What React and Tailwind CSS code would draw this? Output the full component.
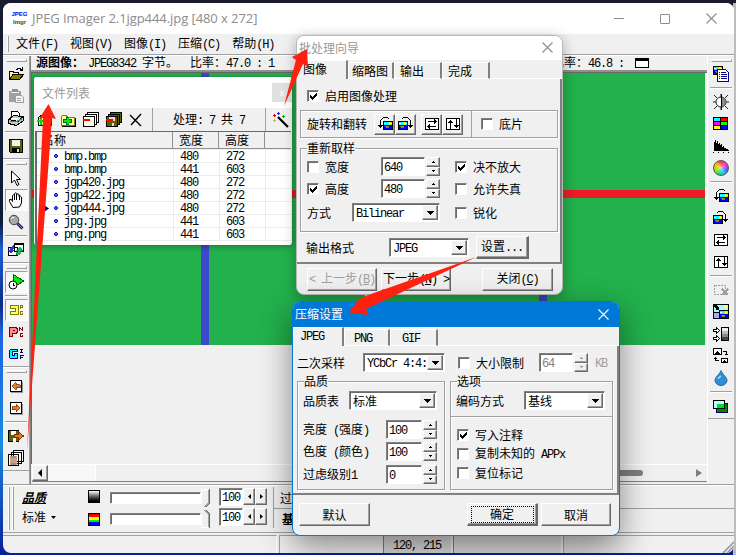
import React from "react";

const RAISED =
  "border border-t-white border-l-white border-r-[#696969] border-b-[#696969] shadow-[inset_-1px_-1px_0_#a0a0a0] bg-[#f0f0f0]";
const SUNKEN =
  "border border-t-[#808080] border-l-[#808080] border-r-white border-b-white shadow-[inset_1px_1px_0_#696969] bg-white";

// Han text stays full width, Latin runs are set at half of that width.
function T({ children, className = "" }) {
  const parts = String(children).split(/([\x20-\x7e]+)/);
  return (
    <span className={"whitespace-pre leading-none " + className}>
      {parts.map((p, i) =>
        i % 2 ? (
          <span key={i} className="font-['Liberation_Mono',monospace] tracking-[-1.2px]">
            {p}
          </span>
        ) : (
          p
        )
      )}
    </span>
  );
}

function Check({ on, children, className = "" }) {
  return (
    <div className={"flex items-center gap-[6px] " + className}>
      <div className={"size-[12px] shrink-0 " + SUNKEN}>
        {on && (
          <svg width="10" height="10" viewBox="0 0 10 10" shapeRendering="crispEdges">
            <path d="M2 4v3h1v1h1v1h1v-1h1v-1h1v-1h1v-1h1v-3h-1v1h-1v1h-1v1h-1v1h-1v-1h-1v-1z" fill="#000" />
          </svg>
        )}
      </div>
      <T>{children}</T>
    </div>
  );
}

function Spin({ value, w, off }) {
  return (
    <div className="flex gap-px">
      <div className={"flex h-[19px] items-center pl-[2px] " + SUNKEN + " " + w}>
        <T className={off ? "text-[#808080]" : ""}>{value}</T>
      </div>
      <div className="flex w-[14px] flex-col">
        {["M2 0h1v1h1v1H1V1h1z", "M1 0h3v1H3v1H2V1H1z"].map((d) => (
          <div key={d} className={"flex h-[9.5px] items-center justify-center " + RAISED}>
            <svg width="5" height="2" shapeRendering="crispEdges">
              <path d={d} fill={off ? "#999" : "#000"} />
            </svg>
          </div>
        ))}
      </div>
    </div>
  );
}

function Select({ children, className = "" }) {
  return (
    <div className={"flex h-[19px] items-center p-px " + SUNKEN + " " + className}>
      <div className="flex min-w-0 flex-1 items-center pl-[2px]">
        <T>{children}</T>
      </div>
      <div className={"flex h-[15px] w-[16px] shrink-0 items-center justify-center " + RAISED}>
        <svg width="7" height="4" shapeRendering="crispEdges">
          <path d="M0 0h7v1H6v1H5v1H4v1H3V3H2V2H1V1H0z" />
        </svg>
      </div>
    </div>
  );
}

function Button({ children, className = "" }) {
  return (
    <div className={"flex h-[23px] shrink-0 items-center justify-center " + RAISED + " " + className}>
      {children}
    </div>
  );
}

function Group({ title, className = "", children }) {
  return (
    <div className={"flex flex-col border border-[#a0a0a0] shadow-[1px_1px_0_#fff,inset_1px_1px_0_#fff] " + className}>
      {title && (
        <div className="-mt-[7px] ml-[6px] h-[13px] self-start bg-[#f0f0f0]">
          <T>{title}</T>
        </div>
      )}
      {children}
    </div>
  );
}

function Tabs({ items }) {
  return (
    <div className="flex h-[19px] shrink-0 items-end">
      {items.map(([t, w, pad], i) => (
        <div
          key={t}
          className={
            "flex items-center border-t border-r-2 border-l border-t-white border-l-white border-r-[#808080] " +
            (i ? "h-[17px] border-b border-b-white " : "h-[19px] pb-[2px] ") +
            w +
            " " +
            pad
          }
        >
          <T>{t}</T>
        </div>
      ))}
      <div className="h-px flex-1 bg-white" />
    </div>
  );
}

const CloseX = ({ c }) => (
  <svg width="11" height="11" viewBox="0 0 11 11" fill="none" stroke={c} strokeWidth="1.1">
    <path d="M.5.5l10 10M10.5.5l-10 10" />
  </svg>
);

function Ic({ children, w = 16, h = 16, className = "" }) {
  return (
    <svg width={w} height={h} viewBox={`0 0 ${w} ${h}`} fill="none" shapeRendering="crispEdges" className={className}>
      {children}
    </svg>
  );
}

const Photo = ({ x, y }) => (
  <g transform={`translate(${x} ${y})`}>
    <path d="M0 0h10v9H0z" fill="#000" />
    <path d="M1 1h8v3H1z" fill="#0ff" />
    <path d="M1 4h8v4H1z" fill="#00f" />
    <path d="M1 2h2v1H1z" fill="#fff" />
    <path d="M6 1h2v3H6zM5 2h4v1H5z" fill="#ff0" />
    <path d="M2 5h4v2H3v-1H2z" fill="#998019" />
  </g>
);
const RotL = () => (
  <Ic>
    <Photo x={6} y={5} />
    <path d="M5 2h1V1h5v1h1v1h-1V2H6v1H5v1H4v5h2v1H5v1H4v1H3v-1H2v-1H1V9h2V4h1V3h1z" fill="#000" />
  </Ic>
);
const RotR = () => (
  <Ic>
    <Photo x={0} y={5} />
    <path d="M11 2h-1V1H5v1H4v1h1V2h5v1h1v1h1v5h-2v1h1v1h1v1h1v-1h1v-1h1V9h-2V4h-1V3h-1z" fill="#000" />
  </Ic>
);
const FlipH = () => (
  <Ic>
    <path d="M1.500 2.500h13v11h-13z" fill="#fff" stroke="#000" />
    <path d="M4 5.500h9M10.500 3v5M11.500 4v3M3 10.500h9M5.500 8v5M4.500 9v3" stroke="#000" />
  </Ic>
);
const FlipV = () => (
  <Ic>
    <path d="M1.500 2.500h13v11h-13z" fill="#fff" stroke="#000" />
    <path d="M5.500 4v9M3 6.500h5M4 5.500h3M11.500 3v9M9 9.500h5M10 10.500h3" stroke="#000" />
  </Ic>
);
const Open = () => (
  <Ic>
    <path d="M1.500 13V5.500h4v1h5V8" fill="#ff9" stroke="#000" />
    <path d="M1.500 13.500L5 8.500h10.500l-4 5z" fill="#808000" stroke="#000" />
    <path d="M8 3.500h1V2.500h3v1h1v1h1M14.500 1v4M12 4.500h3" stroke="#000" />
  </Ic>
);
const Paste = () => (
  <Ic>
    <path d="M1 3h12v11H1z" fill="#a0a0a0" />
    <path d="M4 1h6v4H4z" fill="#909090" />
    <path d="M3 4h8v1H3z" fill="#f0f0f0" />
    <path d="M7.500 7.500h6l2 2v5h-8z" fill="#f4f4f4" stroke="#a0a0a0" />
    <path d="M9 10.500h4M9 12.500h4" stroke="#a0a0a0" />
  </Ic>
);
const Print = () => (
  <Ic>
    <path d="M3.500 6.500v-5h6l2 2v4" fill="#fff" stroke="#000" />
    <path d="M.5 9.500l5-4 9.500 1-5 5zM.5 9.500v4l8 2 7-5V7" fill="#c4c4c4" stroke="#000" />
    <path d="M2 11.500h7l5-3" stroke="#0aa" strokeWidth="1.500" />
    <path d="M3 8.500h7" stroke="#fff" />
  </Ic>
);
const Save = () => (
  <Ic>
    <path d="M1.500 1.500h13v13h-12l-1-1z" fill="#606000" stroke="#000" />
    <path d="M4 2h8v6H4z" fill="#f0f0f0" />
    <path d="M4 10h8v5H4z" fill="#000" />
    <path d="M9 11h2v3H9z" fill="#ddd" />
  </Ic>
);
const Cursor = () => (
  <Ic>
    <path d="M3.500 1v12l3-3 2.500 5.500 2-1-2.500-5h4z" fill="#fff" stroke="#000" shapeRendering="auto" />
  </Ic>
);
const Hand = () => (
  <Ic>
    <path
      d="M5 15.500L1.500 9.500V7.500h2l1 2V3.500q1-1.500 2 0V1.500q1.200-1.500 2.200 0V2.500q1.200-1.500 2.300 0v2q1.500-1 2.500.5v6l-2 4z"
      fill="#fff"
      stroke="#000"
      shapeRendering="auto"
    />
    <path d="M6.500 3v5M8.700 2v6M11 3v5" stroke="#000" />
  </Ic>
);
const Mag = () => (
  <Ic>
    <circle cx="6" cy="6" r="4.700" fill="#a8a8a8" stroke="#444" shapeRendering="auto" />
    <path d="M3 5q1-2 3-2" stroke="#fff" />
    <path d="M9.500 9.500l5 5" stroke="#223" strokeWidth="3" shapeRendering="auto" />
    <path d="M10 10l4 4" stroke="#77f" />
  </Ic>
);
const Swap = () => (
  <Ic>
    <path d="M6.500 1.500h9v8h-9zM.5 5.500h9v8h-9z" fill="#fff" stroke="#000" />
    <path d="M6 2.500h9" stroke="#000" />
    <path d="M6 3L3 5l-1 3H0l3 4 3-4H4l2-2z" fill="#33c" />
    <path d="M12 5l3 4h-2l-1 3-4 1v-2l2-1V9H8z" fill="#0c4" stroke="#063" strokeWidth=".6" />
  </Ic>
);
const Play = () => (
  <Ic>
    <path d="M5.500.5v13l10-6.500z" fill="#0e0" stroke="#060" />
    <circle cx="5" cy="11" r="4" fill="#fff" stroke="#000" shapeRendering="auto" />
    <path d="M5 8.500v3h2" stroke="#000" />
  </Ic>
);
const JpegI = () => (
  <Ic>
    <path d="M2 3.500h8v9H2v-3h5v-3H2z" fill="#ff6" stroke="#808000" />
    <path d="M12.500 7V3.500h2v2h-2M15 9.500h-2.500v3h2v-1.500" stroke="#808000" />
  </Ic>
);
const PngI = () => (
  <Ic>
    <path d="M1.500 3.500h6l2 1v4l-2 1h-3v3h-3z" fill="#f88" stroke="#800000" />
    <path d="M5 6h2v1H5z" fill="#800000" />
    <path d="M11.500 7V3M12.500 4v1M13.500 5v1M14.500 3v4M15 9.500h-2.500v3h2v-1.500" stroke="#800000" />
  </Ic>
);
const GifI = () => (
  <Ic>
    <path d="M9.500 3.500h-7l-1 1v7l1 1h7v-5h-3v2h-2v-4h5z" fill="#0ff" stroke="#000080" />
    <path d="M12 3.500h3M13.500 3v4M12 6.500h3M12.500 13V9.500h3M12.500 11.500h2" stroke="#000080" />
  </Ic>
);
const ArrowBox = ({ flip }) => (
  <Ic>
    <path d="M3 4h12v11H3z" fill="#999" />
    <path d="M2.500 2.500h11v11h-11z" fill="#fff" stroke="#000" />
    <path
      d={flip ? "M4 6.500h4v-2l4 3.500-4 3.500v-2H4z" : "M12 6.500H8v-2L4 8l4 3.500v-2h4z"}
      fill="#e87a20"
      stroke="#7a3500"
      strokeWidth=".8"
    />
  </Ic>
);
const SaveArrow = () => (
  <Ic>
    <path d="M.5 2.500h10v11H.5z" fill="#606000" stroke="#000" />
    <path d="M3 3h5v4H3zM5 10h3v4H5z" fill="#fff" />
    <path d="M6 6.500h4v-3l5.500 4.500-5.500 4.500v-3H6z" fill="#e87a20" stroke="#7a3500" />
  </Ic>
);
const Faces = () => (
  <Ic>
    <path d="M5.500.5h10v11h-10zM3.500 2.500h10v11h-10zM.5 4.500h10v11H.5z" fill="#fff" stroke="#000" />
    <path d="M2 6h7v9H2z" fill="#c9a08c" />
    <path d="M3 6h5v2H3zM3 13h5v2H3z" fill="#a87" />
  </Ic>
);

const Doc = () => (
  <Ic>
    <Photo x={0} y={0} />
    <path d="M4.500 3.500h8l3 3v9h-11z" fill="#fff" stroke="#000080" />
    <path d="M6 6.500h1M8 6.500h5M6 8.500h1M8 8.500h6M6 10.500h1M8 10.500h6M6 12.500h1M8 12.500h6" stroke="#000080" />
  </Ic>
);
const Bright = () => (
  <Ic>
    <path d="M1 1l3 3M15 1l-3 3M1 15l3-3M15 15l-3-3M0 8h3M13 8h3M8 0v16" stroke="#222" shapeRendering="auto" />
    <circle cx="8" cy="8" r="5" fill="#fff" stroke="#222" shapeRendering="auto" />
    <path d="M8 3.500a4.500 4.500 0 010 9z" fill="#888" />
    <path d="M8.500 0v16" stroke="#000" />
  </Ic>
);
const Grid6 = () => (
  <Ic>
    <path d="M0 1h15v13H0z" fill="#000" />
    <path d="M1 2h6v3H1z" fill="#0ff" />
    <path d="M8 2h6v3H8z" fill="red" />
    <path d="M1 6h6v3H1z" fill="#f0f" />
    <path d="M8 6h6v3H8z" fill="#0f0" />
    <path d="M1 10h6v3H1z" fill="#ff0" />
    <path d="M8 10h6v3H8z" fill="#00f" />
  </Ic>
);
const Hist = () => (
  <Ic>
    <path d="M1 12V4h1V2h1v3h1V3h1v3h1V5h1v2h1V6h1v3h1V8h1v2h2v1h2v1h1v1H1z" fill="#000" />
    <path d="M0 14h1v1H0zM5 14h1v1H5zM10 14h1v1h-1zM15 14h1v1h-1z" fill="#000" />
  </Ic>
);
const Wheel = () => (
  <div className="size-[16px] rounded-full border border-[#555] bg-[radial-gradient(circle,#fff9,transparent_60%),conic-gradient(#f33,#e3c,#55f,#0cf,#2d5,#ad0,#fb0,#f33)]" />
);
const Crop = () => (
  <Ic>
    <path d="M1.500 3.500h11v9h-11z" stroke="#a0a0a0" strokeDasharray="2 1" />
    <path d="M9 7l6 6M15 7l-6 6" stroke="#a0a0a0" strokeWidth="1.500" />
  </Ic>
);
const Resize = () => (
  <Ic>
    <path d="M0 0h16v15H0z" fill="#000" />
    <path d="M1 1h14v7H1z" fill="#9ff" />
    <path d="M1 1h3v1h1v1h1v3H3V4H2V3H1z" fill="#000" />
    <path d="M1 9h5v5H1z" fill="#aaf" />
    <path d="M11 1h3v3h-3z" fill="#ff8" />
    <Photo x={6} y={6} />
  </Ic>
);
const Gray = () => (
  <Ic>
    <path d="M.5 3.500h3v-2l3 3-3 3v-2h-3zM.5 11.500h3v-2l3 3-3 3v-2h-3z" fill="#fff" stroke="#000" />
    <path d="M8 1h8v14H8z" fill="#000" />
    <path d="M9 2h6v3H9z" fill="#eee" />
    <path d="M9 5h6v3H9z" fill="#bbb" />
    <path d="M9 8h6v3H9z" fill="#888" />
    <path d="M9 11h6v3H9z" fill="#444" />
  </Ic>
);
const Thumbs = () => (
  <Ic>
    <path d="M.5.5h8v6h-8zM8.500 10.500h6v4h-6z" fill="#fff" stroke="#000" />
    <path d="M2 5h1V4h1V3h1v1h1v1h1v1H2zM10 13h1v-1h1v1h1v1h-3z" fill="#000" />
    <path d="M10 3.500h3.500V7M12 6.500h3M6 12.500H2.500V9M1 10.500h3" stroke="#000" />
  </Ic>
);
const Drop = () => (
  <svg width="14" height="16" viewBox="0 0 14 16">
    <path d="M7 .5C6 4 1 7 1 10.500a6 5 0 0012 0C13 7 8 4 7 .5z" fill="#2e8fd6" stroke="#2b6ca3" />
    <path d="M4 9q1-2 3-3" stroke="#a9dcff" strokeWidth="1.500" fill="none" />
  </svg>
);
const Layers = () => (
  <Ic>
    <path d="M3.500 5.500h11v9h-11z" fill="#080" stroke="#000080" />
    <path d="M.5 2.500h11v8H.5z" fill="#bff" stroke="#000" />
    <path d="M4 6h7v4H4z" fill="#0d3" />
  </Ic>
);

const AddFile = () => (
  <Ic>
    <path d="M1.500 5.500l4-3h6l3 3v8h-13z" fill="#ff9" stroke="#000" />
    <path d="M0 9h8M4 5v8" stroke="#0d0" strokeWidth="2" />
  </Ic>
);
const AddFolder = () => (
  <Ic>
    <path d="M1.500 13.500v-9l1-1h4l1 2h7v8z" fill="#ff9" stroke="#808000" />
    <path d="M15.500 6v8.500H2" stroke="#000" />
    <path d="M3 9h9M7.500 5v8" stroke="#063" strokeWidth="3.500" />
    <path d="M4 9h7M7.500 6v6" stroke="#0e0" strokeWidth="2" />
  </Ic>
);
const DelFile = ({ dark }) => (
  <Ic>
    {[[4.5, 0.5], [2.5, 2.5], [0.5, 4.500]].map(([x, y]) => (
      <path
        key={x}
        d={`M${x} ${y}h11v10h-11z`}
        fill={dark ? "#606000" : "#ffe"}
        stroke="#000"
      />
    ))}
    {dark && <path d="M3 5h6v4H3zM6 11h2v3H6z" fill="#ddd" />}
    <path d="M0 8h7" stroke="red" strokeWidth="2" />
  </Ic>
);
const Wand = () => (
  <Ic>
    <path d="M5 5l10 10" stroke="#000" strokeWidth="2.200" shapeRendering="auto" />
    <path d="M5 0h1v1h1v1H6v1H5V2H4V1h1z" fill="#22c" />
    <path d="M1 2h1v1h1v1H2v1H1V4H0V3h1z" fill="#d00" />
    <path d="M10 3h1v1h1v1h-1v1h-1V5H9V4h1z" fill="#0a0" />
    <path d="M1 7h1v1h1v1H2v1H1V9H0V8h1z" fill="#cc0" />
  </Ic>
);

const Tool = ({ children, on }) => (
  <div
    className={
      "flex h-[22px] w-[23px] shrink-0 items-center justify-center " +
      (on
        ? "border border-t-[#a0a0a0] border-r-white border-b-white border-l-[#a0a0a0] bg-[#f8f8f8]"
        : "")
    }
  >
    {children}
  </div>
);
const Sep = () => (
  <div className="flex h-[6px] w-full shrink-0 items-center px-[2px]">
    <div className="h-[2px] w-full border-t border-[#a0a0a0] bg-white" />
  </div>
);
const Grip = ({ line }) => (
  <div className={"flex w-full shrink-0 flex-col items-center " + (line ? "h-[10px]" : "h-[7px]")}>
    {line && <div className="mt-px mb-[2px] h-[2px] w-full border-t border-[#a0a0a0] bg-white" />}
    <div className={"h-[3px] w-[21px] border border-t-white border-r-[#a0a0a0] border-b-[#a0a0a0] border-l-white " + (line ? "" : "mt-[3px]")} />
  </div>
);

function LeftBar() {
  return (
    <div className="flex w-[27px] shrink-0 flex-col items-center border-r border-[#a0a0a0]">
      <Grip />
      <Tool><Open /></Tool>
      <Tool><Paste /></Tool>
      <Tool><Print /></Tool>
      <Sep />
      <Tool><Save /></Tool>
      <Grip line />
      <Tool><Cursor /></Tool>
      <Tool on><Hand /></Tool>
      <Tool><Mag /></Tool>
      <Sep />
      <Tool><Swap /></Tool>
      <Grip line />
      <Tool on><Play /></Tool>
      <Sep />
      <Tool on><JpegI /></Tool>
      <Tool><PngI /></Tool>
      <Tool><GifI /></Tool>
      <Grip line />
      <Tool><ArrowBox /></Tool>
      <Tool><ArrowBox flip /></Tool>
      <Sep />
      <Tool><SaveArrow /></Tool>
      <Tool><Faces /></Tool>
      <div className="mt-px h-px w-full bg-[#a0a0a0]" />
    </div>
  );
}

function RightBar() {
  return (
    <div className="flex w-[27px] shrink-0 flex-col items-center border-l border-white">
      <Grip />
      <Tool><Doc /></Tool>
      <Sep />
      <Tool><Bright /></Tool>
      <Tool><Grid6 /></Tool>
      <Tool><Hist /></Tool>
      <Tool><Wheel /></Tool>
      <Sep />
      <Tool><RotL /></Tool>
      <Tool><RotR /></Tool>
      <Tool><FlipH /></Tool>
      <Tool><FlipV /></Tool>
      <Sep />
      <Tool><Crop /></Tool>
      <Tool><Resize /></Tool>
      <Tool><Gray /></Tool>
      <Tool><Thumbs /></Tool>
      <Tool><Drop /></Tool>
      <Sep />
      <Tool><Layers /></Tool>
      <div className="mt-px h-px w-full bg-[#a0a0a0]" />
    </div>
  );
}

function Slider({ down }) {
  return (
    <div className="flex w-[100px] items-center">
      <div className={"h-[12px] w-[91px] shrink-0 " + SUNKEN} />
      <Ic w={9} h={18}>
        <g transform={down ? "" : "translate(0 18) scale(1 -1)"}>
          <path d="M0 0h8v14l-4 4-4-4z" fill="#f0f0f0" />
          <path d="M.5 0v14M0 .5h8" stroke="#fff" />
          <path d="M8.500 0v14l-4 4" stroke="#696969" />
          <path d="M7.500 1v13l-4 4" stroke="#a0a0a0" />
        </g>
      </Ic>
    </div>
  );
}

function NumBox() {
  return (
    <div className="flex h-[18px]">
      <div className={"flex w-[24px] items-center pl-[2px] " + SUNKEN}>
        <T>100</T>
      </div>
      {["M3 0v5L0 2.500z", "M0 0v5l3-2.500z"].map((d) => (
        <div key={d} className={"flex h-[17px] w-[12px] items-center justify-center " + RAISED}>
          <svg width="3" height="5"><path d={d} /></svg>
        </div>
      ))}
    </div>
  );
}

function Picture({ className, bar }) {
  return (
    <div className={"relative h-[272px] overflow-hidden bg-[#22b14c] " + className}>
      <div className="mt-[117px] h-[8px] bg-[#ed1c24]" />
      <div className={"absolute top-0 h-full w-[8px] bg-[#3f48cc] " + bar} />
    </div>
  );
}

function MainWindow() {
  return (
    <div className="absolute top-[3px] left-[3px] flex h-[550px] w-[731px] flex-col overflow-hidden rounded-lg bg-[#f0f0f0]">
      <div className="flex h-[31px] shrink-0 items-center bg-white pl-[8px]">
        <div className="flex w-[17px] flex-col items-center gap-px font-['Liberation_Sans',sans-serif] text-[6px] leading-[7px] font-bold">
          <span className="text-[#0000ff]">JPEG</span>
          <span className="text-[#006020]">Imgr</span>
        </div>
        <span className="ml-[4px] flex-1 font-['Open_Sans',sans-serif] text-[13px] tracking-[-0.07px] whitespace-pre text-[#8c8c8c]">
          JPEG Imager 2.1jgp444.jpg [480 x 272]
        </span>
        <div className="flex items-center gap-[36px] pr-[17px]">
          <div className="h-px w-[10px] bg-[#8c8c8c]" />
          <div className="size-[10px] rounded-[1px] border border-[#8c8c8c]" />
          <CloseX c="#8c8c8c" />
        </div>
      </div>
      <div className="flex h-[21px] shrink-0 items-center gap-[12px] border-b border-[#a0a0a0] pl-[4px]">
        <div className="-mr-[5px] h-[16px] w-[2px] border-r border-[#a0a0a0] bg-white" />
        {["文件(F)", "视图(V)", "图像(I)", "压缩(C)", "帮助(H)"].map((m) => (
          <T key={m}>{m}</T>
        ))}
      </div>

      <div className="flex h-[429px] shrink-0 border-t border-white">
        <LeftBar />
        <div className="flex flex-1 flex-col border-l border-[#808080]">
          <div className="flex h-[16px] shrink-0 items-center justify-between border-b-2 border-[#909090] pr-[58px] pl-[5px]">
            <div className="flex">
              <T className="font-bold">源图像：</T>
              <T className="ml-[4px]">JPEG8342 字节。</T>
              <T className="ml-[12px]">比率：47.0 : 1</T>
            </div>
            <div className="flex items-center">
              <T className="mr-[11px]">比率：46.8 :</T>
              <div className="h-[10px] w-[14px] border border-t-[3px] border-black bg-white" />
            </div>
          </div>
          <div className="flex flex-1 border-t border-l border-[#696969]">
            <Picture className="w-[333px]" bar="left-[169px]" />
            <div className="h-[272px] w-[4px] border-r border-l border-r-[#696969] border-l-white bg-[#c8c8c8]" />
            <Picture className="mr-[2px] flex-1" bar="left-[170px]" />
          </div>
          <div className="mb-[2px] ml-[1px] flex h-[18px] shrink-0 items-center border-t border-b border-t-white border-b-[#808080]">
            <div className={"flex h-[16px] w-[16px] items-center justify-center " + RAISED}>
              <svg width="4" height="8"><path d="M4 0v8L0 4z" /></svg>
            </div>
            <div className="h-full w-[47px] bg-[#f8f8f8]" />
            <div className="h-full w-[275px] border-l border-white" />
            <div className="flex flex-1 items-center justify-between pr-[5px] pl-[60px]">
              <div className="h-[6px] w-[213px] rounded-full bg-[#808080]" />
              <svg width="6" height="8"><path d="M0 0v8l6-4z" fill="#808080" /></svg>
            </div>
          </div>
        </div>
        <RightBar />
      </div>

      <div className="flex h-[49px] shrink-0 border-t border-b border-[#a0a0a0] pt-[2px] shadow-[inset_0_1px_0_#fff]">
        <div className="ml-[5px] h-[43px] w-[2px] border-r border-[#a0a0a0] bg-white" />
        <div className="ml-[2px] h-[43px] w-[2px] border-r border-[#a0a0a0] bg-white" />
        <div className="ml-[8px] flex w-[66px] flex-col gap-[8px] pt-[4px]">
          <T className="self-start font-bold italic underline">品质</T>
          <div className="flex items-center gap-[5px]">
            <T>标准</T>
            <svg width="5" height="3"><path d="M0 0h5L2.500 3z" /></svg>
          </div>
        </div>
        <div className="flex w-[22px] flex-col gap-[10px] pt-[3px]">
          <div className="h-[13px] w-[12px] border border-black bg-linear-to-b from-white to-black" />
          <div className="flex h-[13px] w-[12px] flex-col border border-black">
            <div className="flex-1 bg-[#ff0000]" />
            <div className="flex-1 bg-[#ffff00]" />
            <div className="flex-1 bg-[#00ee00]" />
            <div className="flex-1 bg-[#0000ff]" />
          </div>
        </div>
        <div className="flex w-[109px] flex-col gap-[3px] pt-[2px]">
          <Slider down />
          <Slider />
        </div>
        <div className="flex w-[54px] flex-col gap-[2px] pt-px">
          <NumBox />
          <NumBox />
        </div>
        <div className="h-[41px] flex-1 border-l border-[#a0a0a0]">
          <div className="flex h-[22px] items-center border-b border-[#a0a0a0] pl-[6px]"><T>过滤</T></div>
          <div className="flex h-[20px] items-center pl-[8px]"><T className="font-bold">基线</T></div>
        </div>
      </div>
      <div className="flex flex-1 items-stretch gap-[2px] pt-[2px]">
        <div className="w-[274px] border-t border-r border-t-[#a0a0a0] border-r-white" />
        <div className="flex w-[102px] items-center border-t border-l border-[#a0a0a0] pl-[35px] text-[#f4f4f4]"><T>0 0秒</T></div>
        <div className="flex w-[68px] items-center border-t border-l border-[#808080] bg-[#dcdcdc] pl-[9px]"><T>120, 215</T></div>
        <div className="w-[108px] border-t border-l border-[#808080] bg-[#dcdcdc]" />
        <div className="flex flex-1 items-end justify-end border-t border-l border-[#a0a0a0] bg-linear-to-r from-[#dcdcdc] to-[#f0f0f0] to-50%">
          <svg width="12" height="12"><path d="M1 12L12 1M5 12l7-7M9 12l3-3" stroke="#909090" strokeWidth="1.500" /></svg>
        </div>
      </div>
    </div>
  );
}

const FILES = [
  ["bmp.bmp", 480, 272],
  ["bmp.bmp", 441, 603],
  ["jgp420.jpg", 480, 272],
  ["jgp422.jpg", 480, 272],
  ["jgp444.jpg", 480, 272],
  ["jpg.jpg", 441, 603],
  ["png.png", 441, 603],
];

function FileList() {
  return (
    <div className="absolute top-[77px] left-[34px] flex h-[168px] w-[258px] flex-col overflow-hidden rounded-[3px] bg-[#f0f0f0] shadow-[0_1px_6px_rgba(0,0,0,.35)]">
      <div className="flex h-[31px] shrink-0 items-center justify-between bg-white pl-[8px] text-[#999]">
        <T>文件列表</T>
        <div className="flex h-[19px] w-[20px] items-center justify-center bg-[#e0e0e0] text-[9px] text-white">x</div>
      </div>
      <div className="flex h-[23px] shrink-0 items-center">
        <div className="flex w-[118px] gap-[7px] pl-[3px]">
          <AddFile />
          <AddFolder />
          <DelFile />
          <DelFile dark />
          <Ic w={14} h={16}>
            <path d="M1 3l11 11M12 2L2 13" stroke="#000" strokeWidth="1.400" shapeRendering="auto" />
          </Ic>
        </div>
        <div className="flex h-full w-[114px] items-center border-r border-l border-[#a0a0a0] pl-[20px]">
          <T>处理: 7 共 7</T>
        </div>
        <div className="pl-[7px]"><Wand /></div>
      </div>
      <div className="mr-px ml-[1px] flex flex-1 flex-col border-t border-l-2 border-[#696969] bg-white">
        <div className="flex h-[17px] shrink-0 items-center border-b border-[#909090] bg-[#f0f0f0]">
          <div className="flex h-full w-[136px] items-center border-r border-[#909090] pl-[5px]"><T>名称</T></div>
          <div className="flex h-full w-[46px] items-center border-r border-[#909090] pl-[6px]"><T>宽度</T></div>
          <div className="flex h-full w-[46px] items-center border-r border-[#909090] pl-[6px]"><T>高度</T></div>
        </div>
        <div className="h-px shrink-0 bg-[#eee]" />
        {FILES.map(([n, w, h], i) => (
          <div key={i} className="flex h-[13px] shrink-0 border-b border-[#ececec]">
            <div className="flex w-[137px] items-center border-r border-[#ececec]">
              <div className="w-[17px] pl-[7px]">
                {i === 4 && <svg width="5" height="7"><path d="M0 0v7l5-3.500z" fill="#000080" /></svg>}
              </div>
              <div className="mr-[6px] size-[4px] rounded-full border border-[#0000b0] bg-[#6080ff]" />
              <T>{n}</T>
            </div>
            <div className="flex w-[46px] items-center border-r border-[#ececec] pl-[6px]"><T>{w}</T></div>
            <div className="flex w-[46px] items-center border-r border-[#ececec] pl-[6px]"><T>{h}</T></div>
          </div>
        ))}
      </div>
    </div>
  );
}

function Wizard() {
  return (
    <div className="absolute top-[35px] left-[296px] flex h-[260px] w-[267px] flex-col overflow-hidden rounded-lg border border-[#b8b8b8] bg-[#f0f0f0] shadow-[0_3px_14px_rgba(0,0,0,.3)]">
      <div className="flex h-[24px] shrink-0 items-center justify-between bg-white pr-[9px] pb-px pl-[2px] text-[#999]">
        <T>批处理向导</T>
        <CloseX c="#8c8c8c" />
      </div>
      <Tabs
        items={[
          ["图像", "w-[51px]", "pl-[5px]"],
          ["缩略图", "w-[46px]", "pl-[3px]"],
          ["输出", "w-[48px]", "pl-[5px]"],
          ["完成", "w-[48px]", "pl-[5px]"],
        ]}
      />
      <div className="flex h-[185px] shrink-0 flex-col border-r-2 border-b-2 border-[#808080] pr-[2px] pl-[3px]">
        <Check on className="ml-[7px] h-[31px] pt-[3px]">启用图像处理</Check>
        <Group className="h-[28px]">
          <div className="flex h-full items-center pl-[6px]">
            <T>旋转和翻转</T>
            <div className="ml-[7px] flex">
              <div className={"flex size-[21px] items-center justify-center " + RAISED}><RotL /></div>
              <div className={"flex size-[21px] items-center justify-center " + RAISED}><RotR /></div>
              <div className={"ml-[5px] flex size-[21px] items-center justify-center " + RAISED}><FlipH /></div>
              <div className={"flex size-[21px] items-center justify-center " + RAISED}><FlipV /></div>
            </div>
            <div className="ml-[8px] h-full w-px bg-[#a0a0a0]" />
            <Check className="ml-[9px]">底片</Check>
          </div>
        </Group>
        <Group title="重新取样" className="mt-[10px] h-[84px]">
          <div className="mt-[2px] flex h-[19px] shrink-0 items-center pl-[6px]">
            <Check className="w-[74px]">宽度</Check>
            <Spin value="640" w="w-[44px]" />
            <Check on className="ml-[15px]">决不放大</Check>
          </div>
          <div className="mt-[3px] flex h-[19px] shrink-0 items-center pl-[6px]">
            <Check on className="w-[74px]">高度</Check>
            <Spin value="480" w="w-[44px]" />
            <Check className="ml-[15px]">允许失真</Check>
          </div>
          <div className="mt-[5px] flex h-[19px] shrink-0 items-center pl-[6px]">
            <T className="w-[45px]">方式</T>
            <Select className="w-[88px]">Bilinear</Select>
            <Check className="ml-[15px]">锐化</Check>
          </div>
        </Group>
        <div className="mt-[6px] flex h-[19px] items-center pl-[6px]">
          <T className="w-[83px]">输出格式</T>
          <Select className="w-[80px]">JPEG</Select>
          <Button className="ml-[7px] h-[20px] w-[53px] border-r-2 border-b-2 border-[#696969]"><T>设置...</T></Button>
        </div>
      </div>
      <div className="flex h-[30px] shrink-0 items-center pl-[10px]">
        <Button className="w-[70px]">
          <T className="text-[#a0a0a0]">{"< 上一步("}</T><T className="text-[#a0a0a0] underline">B</T><T className="text-[#a0a0a0]">)</T>
        </Button>
        <Button className="ml-[4px] w-[70px]">
          <T>下一步(</T><T className="underline">N</T><T>{") >"}</T>
        </Button>
        <Button className="ml-[31px] w-[71px]"><T>关闭(</T><T className="underline">C</T><T>)</T></Button>
      </div>
    </div>
  );
}

function Settings() {
  return (
    <div className="absolute top-[301px] left-[292px] flex h-[235px] w-[328px] flex-col overflow-hidden rounded-lg border border-[#0078d7] bg-[#f0f0f0] shadow-[0_10px_32px_rgba(0,0,0,.45)]">
      <div className="flex h-[25px] shrink-0 items-center justify-between bg-[#0078d7] pr-[10px] pb-px pl-[2px] text-white">
        <T>压缩设置</T>
        <CloseX c="#fff" />
      </div>
      <Tabs
        items={[
          ["JPEG", "w-[51px]", "pl-[6px]"],
          ["PNG", "w-[46px]", "pl-[9px]"],
          ["GIF", "w-[48px]", "pl-[11px]"],
        ]}
      />
      <div className="flex h-[149px] shrink-0 flex-col border-r-2 border-b-2 border-[#808080] pl-[4px]">
        <div className="mt-[7px] flex h-[19px] shrink-0 items-center">
          <T className="w-[66px]">二次采样</T>
          <Select className="w-[82px]">YCbCr 4:4:</Select>
          <Check className="ml-[13px] w-[81px]">大小限制</Check>
          <Spin value="64" w="w-[34px]" off />
          <T className="ml-[7px] text-[#a0a0a0]">KB</T>
        </div>
        <div className="mt-[9px] flex gap-[5px]">
          <Group title="品质" className="h-[109px] w-[148px]">
            <div className="mt-[3px] flex h-[19px] shrink-0 items-center pl-[5px]">
              <T className="w-[46px]">品质表</T>
              <Select className="w-[88px]">标准</Select>
            </div>
            <div className="mt-[10px] flex h-[19px] shrink-0 items-center pl-[5px]">
              <T className="w-[83px]">亮度 (强度)</T>
              <Spin value="100" w="w-[36px]" />
            </div>
            <div className="mt-[3px] flex h-[19px] shrink-0 items-center pl-[5px]">
              <T className="w-[83px]">色度 (颜色)</T>
              <Spin value="100" w="w-[36px]" />
            </div>
            <div className="mt-[4px] flex h-[19px] shrink-0 items-center pl-[5px]">
              <T className="w-[83px]">过虑级别1</T>
              <Spin value="0" w="w-[36px]" />
            </div>
          </Group>
          <Group title="选项" className="h-[109px] w-[163px]">
            <div className="mt-[3px] flex h-[19px] shrink-0 items-center pl-[5px]">
              <T className="w-[68px]">编码方式</T>
              <Select className="w-[81px]">基线</Select>
            </div>
            <div className="mt-[6px] h-[2px] shrink-0 border-t border-[#a0a0a0] bg-white" />
            <Check on className="mt-[7px] ml-[6px] h-[19px]">写入注释</Check>
            <Check className="ml-[6px] h-[19px]">复制未知的 APPx</Check>
            <Check className="ml-[6px] h-[19px]">复位标记</Check>
          </Group>
        </div>
      </div>
      <div className="flex flex-1 items-center pb-px pl-[6px]">
        <Button className="w-[71px]"><T>默认</T></Button>
        <Button className="ml-[97px] w-[71px] border-r-2 border-b-2 border-[#696969]">
          <div className="flex h-[17px] w-[63px] items-center justify-center border border-dotted border-black"><T>确定</T></div>
        </Button>
        <Button className="ml-[3px] w-[70px]"><T>取消</T></Button>
      </div>
    </div>
  );
}

export default function App() {
  return (
    <div className="relative h-[555px] w-[736px] overflow-hidden bg-[linear-gradient(180deg,#1a1c2e_0,#0b1c3a_40%,#1e5fd8_45%,#0d2a8a_55%,#1d63e0_60%,#1a8ae0_80%,#0a1e9a_100%)] font-['Noto_Sans_CJK_SC',sans-serif] text-[12px] leading-none text-black">
      <div className="ml-auto h-full w-[3px] border-t-[3px] border-[#1a1c2e] bg-[#bdbdbd]" />
      <MainWindow />
      <FileList />
      <Wizard />
      <Settings />
      <svg className="absolute top-0 left-0" width="736" height="555" fill="#ff2010">
        <path d="M27 452L43 118 39 119 48.500 104 56 119 52 118z" />
        <path d="M284 106L296 60 292 57 307 49 308 67 303 64z" />
        <path d="M476.500 257L371 294 359 299 349 312.500 368 315 366 309z" />
      </svg>
    </div>
  );
}
